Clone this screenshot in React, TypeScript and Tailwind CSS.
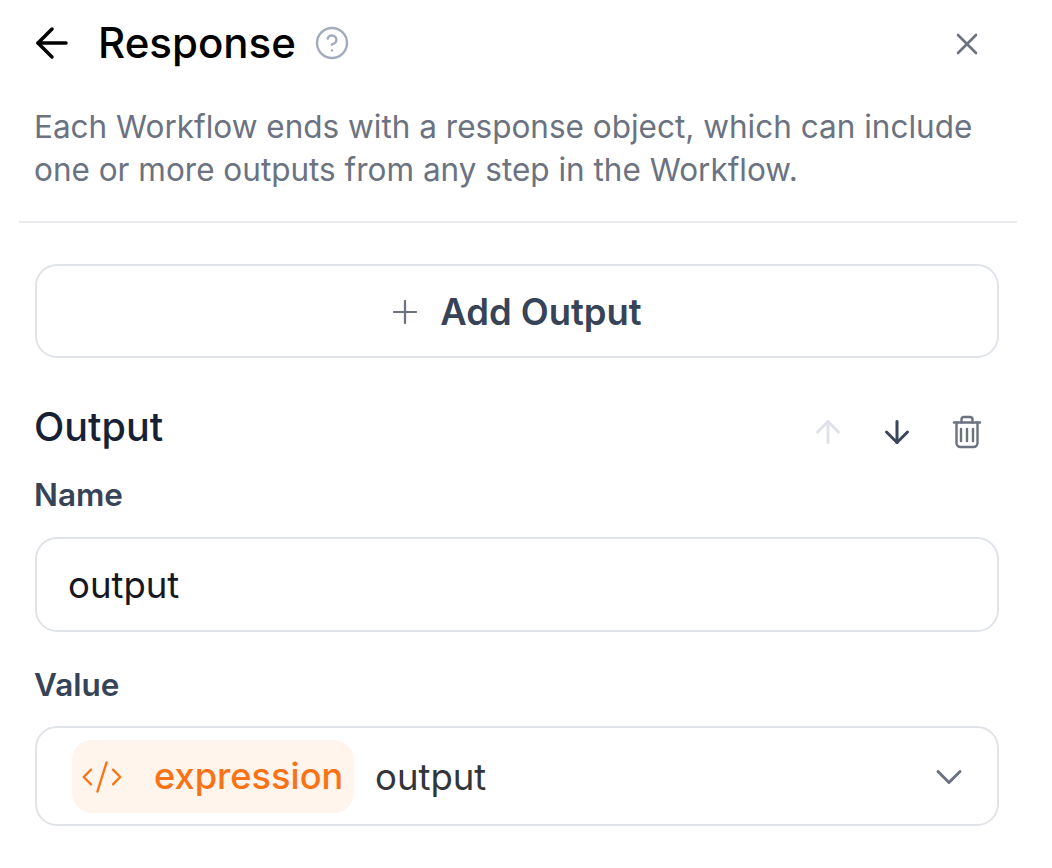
import { ArrowDown, ArrowLeft, ArrowUp, ChevronDown, CircleHelp, CodeXml, Plus, X } from 'lucide-react'

function TrashIcon() {
  return (
    <svg viewBox="0 0 30 34" className="ml-[4px] h-[34px] w-[30px] text-[#6b7280]" fill="none" stroke="currentColor" strokeWidth="2.4" strokeLinecap="round" strokeLinejoin="round">
      <path d="M2 7.5h26" />
      <path d="M9.5 7.5V4.5a2.5 2.5 0 0 1 2.5-2.5h6a2.5 2.5 0 0 1 2.5 2.5v3" />
      <path d="M4.5 7.5V28a4 4 0 0 0 4 4h13a4 4 0 0 0 4-4V7.5" />
      <path d="M9 14v12M15 14v12M21 14v12" />
    </svg>
  )
}

export default function App() {
  return (
    <div className="h-[868px] w-[1052px] overflow-hidden bg-white font-['Inter',sans-serif]">
      <div className="ml-[19px] w-[998px] border-b-2 border-[#e9ebee] pb-[30px]">
        <div className="flex h-[86px] items-center pl-[9px] pr-[32px]">
          <ArrowLeft className="h-[48px] w-[48px] text-black" strokeWidth={1.75} />
          <h1 className="ml-[22px] text-[42px] leading-none font-medium text-black">Response</h1>
          <CircleHelp className="ml-[18px] h-[36px] w-[36px] text-[#a3acbc]" strokeWidth={1.6} />
          <X className="ml-auto mt-[2px] h-[36px] w-[36px] text-[#6b7280]" strokeWidth={1.75} />
        </div>
        <p className="mt-[19px] pl-[15px] text-[31.5px] leading-[43px] text-[#6b7280]">
          Each Workflow ends with a response object, which can include one or more outputs from any step in the Workflow.
        </p>
      </div>

      <div className="ml-[35px] w-[964px]">
        <button className="mt-[41px] flex h-[94px] w-full items-center justify-center rounded-[22px] border-2 border-[#e0e3e8] pr-[6px] pt-[2px] text-[36.4px] font-semibold text-[#374357]">
          <Plus className="mr-[16px] h-[38px] w-[38px] text-[#6b7280]" strokeWidth={1.4} />
          Add Output
        </button>

        <div className="mt-[46px] flex items-center justify-between">
          <h2 className="ml-[-1px] text-[39.5px] leading-[46px] font-medium text-[#182134]">Output</h2>
          <div className="flex items-center gap-[33px] pr-[17px] pt-[10px]">
            <ArrowUp className="h-[36px] w-[36px] text-[#dfe2e8]" strokeWidth={2} />
            <ArrowDown className="h-[36px] w-[36px] text-[#3b4658]" strokeWidth={2} />
            <TrashIcon />
          </div>
        </div>

        <label className="mt-[27px] ml-[-1px] block text-[31.5px] leading-[36px] font-semibold text-[#374357]">Name</label>
        <div className="mt-[24px] flex h-[95px] items-center rounded-[22px] border-2 border-[#e0e3e8] px-[31px] pt-[2px] text-[36.5px] text-[#16181d]">
          output
        </div>

        <label className="mt-[35px] ml-[-1px] block text-[31.5px] leading-[36px] font-semibold text-[#374357]">Value</label>
        <div className="mt-[23px] flex h-[100px] items-center rounded-[22px] border-2 border-[#e0e3e8] pl-[35px] pr-[26px] pt-[1px]">
          <span className="flex h-[73px] w-[282px] items-center rounded-[20px] bg-[#fff5ed] pl-[8px] text-[36.2px] font-medium text-[#f97316]">
            <CodeXml className="h-[44px] w-[44px]" strokeWidth={1.25} />
            <span className="ml-[30px]">expression</span>
          </span>
          <span className="ml-[21px] pt-[1px] text-[36.5px] text-[#333639]">output</span>
          <ChevronDown className="ml-auto h-[44px] w-[44px] text-[#6b7280]" strokeWidth={1.6} />
        </div>
      </div>
    </div>
  )
}
